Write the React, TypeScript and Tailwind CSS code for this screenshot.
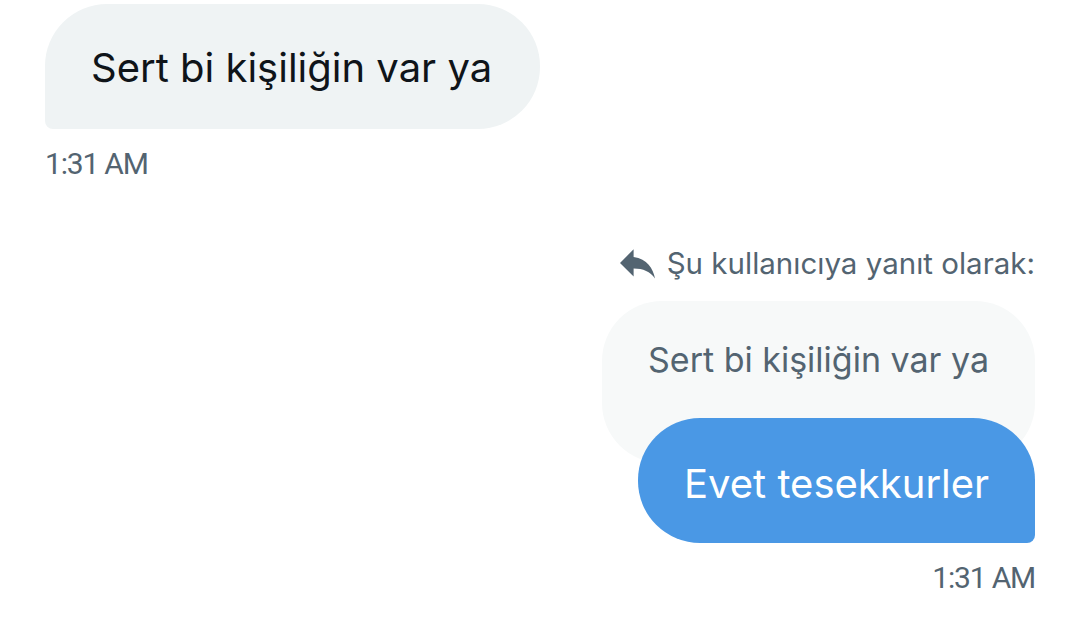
const TEXT = "font-['Inter','Noto_Sans',sans-serif]";

function ReplyIcon() {
  return (
    <svg viewBox="3 5 18 15.1" className="h-[30px] w-[35px] fill-[#536471]" aria-hidden>
      <path d="M10 9V5l-7 7 7 7v-4.1c5 0 8.5 1.6 11 5.1-1-5-4-10-11-11z" />
    </svg>
  );
}

function Time({ className = "" }: { className?: string }) {
  return (
    <div
      className={`font-['Roboto',sans-serif] text-[30px] leading-none tracking-[-1.2px] text-[#536471] ${className}`}
    >
      1:31 AM
    </div>
  );
}

export default function App() {
  return (
    <div className={`h-[631px] w-[1080px] overflow-hidden bg-white ${TEXT}`}>
      <div className="flex flex-col items-start pl-[45px] pt-[4px]">
        <div className="flex h-[125px] items-center rounded-[62px] rounded-bl-[8px] bg-[#eff3f4] pl-[46px] pr-[48px] pt-[2px]">
          <span className="text-[40px] leading-none text-[#0f1419]">Sert bi kişiliğin var ya</span>
        </div>
        <Time className="mt-[20px]" />
      </div>

      <div className="mt-[70px] flex flex-col items-end pr-[45px]">
        <div className="flex items-center gap-[12px]">
          <ReplyIcon />
          <span className="text-[29.5px] leading-none text-[#536471]">Şu kullanıcıya yanıt olarak:</span>
        </div>
        <div className="mt-[22px] w-[433px] rounded-[60px] bg-[#f7f9f9] pb-[85px] pl-[46px] pt-[42px]">
          <span className="text-[34px] leading-none text-[#536471]">Sert bi kişiliğin var ya</span>
        </div>
        <div className="-mt-[45px] flex h-[125px] w-[397px] items-center rounded-[62px] rounded-br-[8px] bg-[#4a98e5] pl-[46px] pt-[6px]">
          <span className="text-[40px] leading-none text-white">Evet tesekkurler</span>
        </div>
        <Time className="mt-[20px]" />
      </div>
    </div>
  );
}
